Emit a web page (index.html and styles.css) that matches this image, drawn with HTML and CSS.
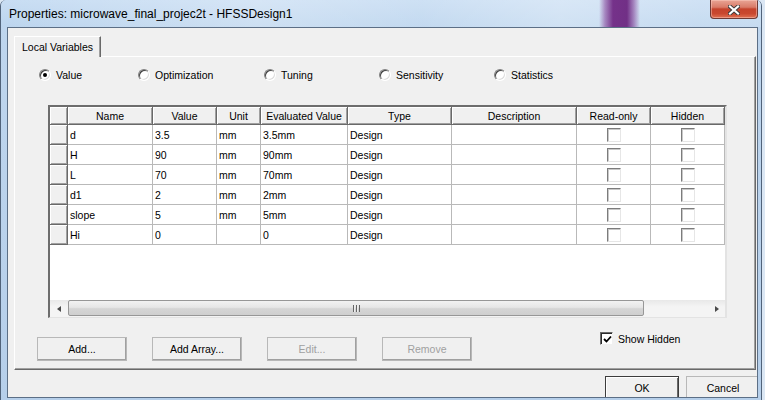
FILE: index.html
```html
<!DOCTYPE html>
<html>
<head>
<meta charset="utf-8">
<title>Properties</title>
<link rel="stylesheet" href="styles.css">
</head>
<body>
<div class="window">
  <div class="titlebar">
    <span class="title">Properties: microwave_final_projec2t - HFSSDesign1</span>
    <button class="close" aria-label="Close">
      <svg width="12" height="10" viewBox="0 0 12 10">
        <path d="M2 1.5 L10 8.5 M10 1.5 L2 8.5" stroke="#3a3a3a" stroke-width="4" stroke-linecap="square"/>
        <path d="M2 1.5 L10 8.5 M10 1.5 L2 8.5" stroke="#ffffff" stroke-width="2.2" stroke-linecap="square"/>
      </svg>
    </button>
  </div>
  <div class="client">
    <div class="tabs"><div class="tab">Local Variables</div></div>
    <div class="panel">
      <div class="radios">
        <label class="radio"><span class="dot checked"></span>Value</label>
        <label class="radio"><span class="dot"></span>Optimization</label>
        <label class="radio"><span class="dot"></span>Tuning</label>
        <label class="radio"><span class="dot"></span>Sensitivity</label>
        <label class="radio"><span class="dot"></span>Statistics</label>
      </div>
      <div class="grid">
        <div class="grid-body">
          <table>
            <colgroup>
              <col class="c-rh"><col class="c-name"><col class="c-val"><col class="c-unit"><col class="c-eval"><col class="c-type"><col class="c-desc"><col class="c-chk"><col class="c-chk">
            </colgroup>
            <thead>
              <tr><th></th><th>Name</th><th>Value</th><th>Unit</th><th>Evaluated Value</th><th>Type</th><th>Description</th><th>Read-only</th><th>Hidden</th></tr>
            </thead>
            <tbody>
              <tr><th></th><td>d</td><td>3.5</td><td>mm</td><td>3.5mm</td><td>Design</td><td></td><td class="cc"><span class="cbox"></span></td><td class="cc"><span class="cbox"></span></td></tr>
              <tr><th></th><td>H</td><td>90</td><td>mm</td><td>90mm</td><td>Design</td><td></td><td class="cc"><span class="cbox"></span></td><td class="cc"><span class="cbox"></span></td></tr>
              <tr><th></th><td>L</td><td>70</td><td>mm</td><td>70mm</td><td>Design</td><td></td><td class="cc"><span class="cbox"></span></td><td class="cc"><span class="cbox"></span></td></tr>
              <tr><th></th><td>d1</td><td>2</td><td>mm</td><td>2mm</td><td>Design</td><td></td><td class="cc"><span class="cbox"></span></td><td class="cc"><span class="cbox"></span></td></tr>
              <tr><th></th><td>slope</td><td>5</td><td>mm</td><td>5mm</td><td>Design</td><td></td><td class="cc"><span class="cbox"></span></td><td class="cc"><span class="cbox"></span></td></tr>
              <tr><th></th><td>Hi</td><td>0</td><td></td><td>0</td><td>Design</td><td></td><td class="cc"><span class="cbox"></span></td><td class="cc"><span class="cbox"></span></td></tr>
            </tbody>
          </table>
        </div>
        <div class="hscroll">
          <div class="arrow"><span class="tri-left"></span></div>
          <div class="track">
            <div class="thumb"><span class="grip"></span></div>
          </div>
          <div class="arrow"><span class="tri-right"></span></div>
        </div>
      </div>
      <div class="actions">
        <button class="btn wide">Add...</button>
        <button class="btn wide">Add Array...</button>
        <button class="btn wide" disabled>Edit...</button>
        <button class="btn wide" disabled>Remove</button>
        <label class="check">
          <span class="checkbox">
            <svg width="9" height="9" viewBox="0 0 9 9"><path d="M1 4 L3.5 6.5 L8 1.5" stroke="#000" stroke-width="1.8" fill="none"/></svg>
          </span>Show Hidden
        </label>
      </div>
    </div>
    <div class="footer">
      <button class="btn small default">OK</button>
      <button class="btn small">Cancel</button>
    </div>
  </div>
</div>
</body>
</html>
```

FILE: styles.css
```css
* { box-sizing: border-box; }
html, body { margin: 0; padding: 0; }
body {
  width: 765px;
  height: 400px;
  overflow: hidden;
  background: #dbe7f4;
  font-family: "Liberation Sans", Arial, sans-serif;
  font-size: 10.5px;
  color: #000;
}
.window {
  position: relative;
  width: 762px;
  height: 400px;
  border-left: 1px solid #51637a;
  border-right: 1px solid #51637a;
  border-radius: 6px 6px 0 0;
  background: linear-gradient(to bottom, #bfd6ee, #b6cfea);
  overflow: hidden;
}
.titlebar {
  height: 27px;
  display: flex;
  align-items: center;
  padding: 1px 0 0 8px;
  font-size: 12px;
  background:
    linear-gradient(90deg, transparent 598px, rgba(130, 60, 150, 0.55) 604px, rgba(112, 40, 132, 0.95) 612px, rgba(108, 38, 128, 0.95) 626px, rgba(130, 60, 150, 0.55) 633px, transparent 639px),
    linear-gradient(90deg, rgba(255,255,255,0) 0, rgba(255,255,255,0.25) 260px, rgba(255,255,255,0.1) 420px, rgba(255,255,255,0.3) 560px, rgba(255,255,255,0.15) 700px),
    linear-gradient(to bottom, #c8ddf3, #bcd5ee);
}
.title { color: #000; }
.close {
  position: absolute;
  top: 0;
  right: 3px;
  width: 48px;
  height: 19px;
  padding: 0;
  border: 1px solid #6e3a35;
  border-top: none;
  border-radius: 0 0 4px 4px;
  background: linear-gradient(to bottom, #e9a595 0, #d97b68 40%, #c5432c 50%, #c9482f 75%, #e07052 100%);
  box-shadow: inset 0 0 0 1px rgba(255, 210, 200, 0.45);
  display: flex;
  align-items: center;
  justify-content: center;
}
.close svg { display: block; margin-top: 1px; }
.client {
  margin: 0 3px 0 6px;
  height: 371px;
  border: 1px solid #5c6f86;
  background: #f0f0f0;
  overflow: hidden;
}
.tabs {
  display: flex;
  padding: 8px 0 0 6px;
}
.tab {
  position: relative;
  z-index: 1;
  width: 87px;
  height: 21px;
  margin-bottom: -1px;
  padding: 4px 0 0 7px;
  background: #f0f0f0;
  border-top: 1px solid #ffffff;
  border-left: 1px solid #ffffff;
  border-right: 1px solid #696969;
  box-shadow: inset -1px 0 #a0a0a0;
  font-size: 10.5px;
}
.panel {
  margin: 0 1px 0 6px;
  height: 314px;
  border-top: 1px solid #ffffff;
  border-left: 1px solid #ffffff;
  border-right: 1px solid #696969;
  border-bottom: 1px solid #696969;
  box-shadow: inset -1px -1px #a0a0a0;
}
.radios {
  display: grid;
  grid-template-columns: 99px 126px 115px 115px auto;
  margin: 11px 0 0 24px;
  height: 14px;
}
.radio {
  display: flex;
  align-items: center;
  gap: 5px;
  font-size: 10.5px;
}
.dot {
  position: relative;
  width: 12px;
  height: 12px;
  border-radius: 50%;
  border: 1px solid;
  border-color: #808080 #ffffff #ffffff #808080;
  box-shadow: inset 1px 1px #404040, inset -1px -1px #dcdcdc;
  background: #ffffff;
}
.dot.checked::after {
  content: "";
  position: absolute;
  left: 3px;
  top: 3px;
  width: 4px;
  height: 4px;
  border-radius: 50%;
  background: #000;
}
.grid {
  margin: 23px 0 0 33px;
  width: 679px;
  height: 213px;
  display: flex;
  flex-direction: column;
  background: #ffffff;
  border-top: 2px solid #6d6d6d;
  border-left: 2px solid #6d6d6d;
  border-right: 2px solid #e3e3e3;
  border-bottom: 1px solid #e3e3e3;
}
.grid-body { flex: 1; overflow: hidden; }
table {
  table-layout: fixed;
  border-collapse: separate;
  border-spacing: 0;
  width: 675px;
}
.c-rh { width: 18px; }
.c-name { width: 85px; }
.c-val { width: 64px; }
.c-unit { width: 44px; }
.c-eval { width: 87px; }
.c-type { width: 104px; }
.c-desc { width: 125px; }
.c-chk { width: 74px; }
thead th {
  height: 18px;
  padding: 0;
  font-weight: normal;
  text-align: center;
  background: #f0f0f0;
  border-right: 1px solid #696969;
  border-bottom: 1px solid #696969;
  box-shadow: inset 1px 1px #ffffff, inset -1px -1px #a0a0a0;
  white-space: nowrap;
  overflow: hidden;
}
tbody th {
  height: 20px;
  padding: 0;
  background: #f0f0f0;
  border-right: 1px solid #696969;
  border-bottom: 1px solid #696969;
  box-shadow: inset 1px 1px #ffffff, inset -1px -1px #a0a0a0;
}
tbody td {
  height: 20px;
  padding: 0 0 0 2px;
  border-right: 1px solid #b9b9b9;
  border-bottom: 1px solid #b9b9b9;
  white-space: nowrap;
  overflow: hidden;
}
tbody td.cc { padding: 0; text-align: center; }
.cbox {
  display: inline-block;
  vertical-align: middle;
  width: 14px;
  height: 14px;
  margin-top: 1px;
  border: 1px solid;
  border-color: #7c7c7c #e6e6e6 #e6e6e6 #7c7c7c;
  box-shadow: inset 1px 1px #c8c8c8;
  background: #ffffff;
}
.hscroll {
  height: 17px;
  display: flex;
  background: linear-gradient(to bottom, #e8e8e8, #f4f4f4 40%, #f4f4f4);
}
.arrow {
  width: 17px;
  flex: none;
  display: flex;
  align-items: center;
  justify-content: center;
}
.tri-left {
  width: 0; height: 0;
  border-top: 3.5px solid transparent;
  border-bottom: 3.5px solid transparent;
  border-right: 4px solid #4a4a4a;
}
.tri-right {
  width: 0; height: 0;
  border-top: 3.5px solid transparent;
  border-bottom: 3.5px solid transparent;
  border-left: 4px solid #4a4a4a;
}
.track { flex: 1; padding: 0 0 0 1px; }
.thumb {
  width: 576px;
  height: 16px;
  border: 1px solid #979797;
  border-radius: 2px;
  background: linear-gradient(to bottom, #f2f2f2 0, #e6e6e6 45%, #d5d5d5 55%, #cfcfcf 100%);
  display: flex;
  align-items: center;
  justify-content: center;
}
.grip {
  width: 7px;
  height: 7px;
  background: repeating-linear-gradient(90deg, #666 0 1px, #eee 1px 2px, transparent 2px 3px);
}
.actions {
  display: flex;
  align-items: flex-start;
  gap: 25px;
  margin: 19px 0 0 22px;
}
.btn {
  font-family: "Liberation Sans", Arial, sans-serif;
  font-size: 10.5px;
  color: #000;
  height: 24px;
  padding: 0;
  background: #f0f0f0;
  border: 1px solid;
  border-color: #ffffff #696969 #696969 #ffffff;
  box-shadow: inset -1px -1px #a0a0a0;
  outline: 1px solid #b8b8b8;
  outline-offset: -1px;
}
.btn.wide { width: 90px; }
.btn:disabled { color: #a0a0a0; }
.check {
  display: flex;
  align-items: center;
  gap: 5px;
  margin: -5px 0 0 103px;
  font-size: 10.5px;
}
.checkbox {
  width: 13px;
  height: 13px;
  display: flex;
  align-items: center;
  justify-content: center;
  background: #fff;
  border: 1px solid;
  border-color: #696969 #f0f0f0 #f0f0f0 #696969;
  box-shadow: inset 1px 1px #2a2a2a;
}
.checkbox svg { display: block; margin: 1px 0 0 1px; }
.footer {
  display: flex;
  justify-content: flex-end;
  gap: 7px;
  margin: 6px -3px 0 0;
}
.btn.small { width: 74px; }
.btn.default {
  border-color: #3c3c3c;
  box-shadow: inset 1px 1px #fff, inset -1px -1px #696969;
  outline: none;
}
```
